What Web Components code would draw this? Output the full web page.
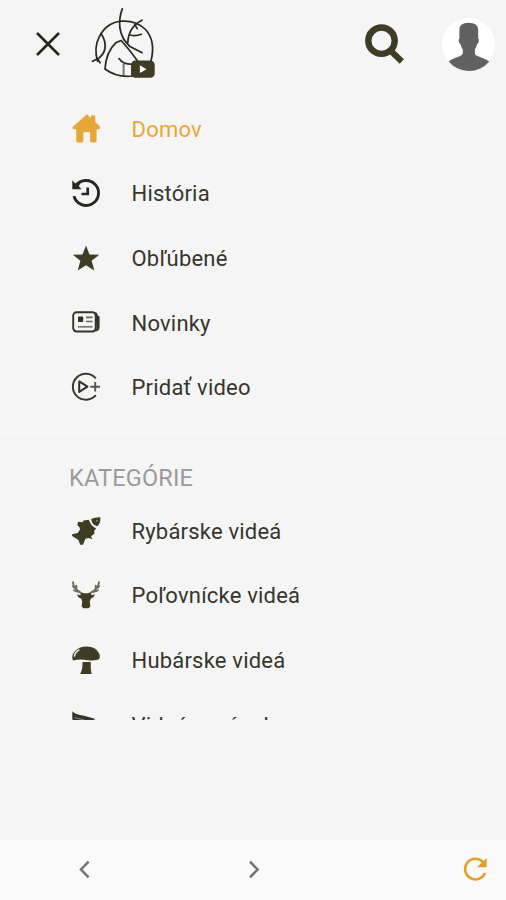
<!DOCTYPE html>
<html lang="sk">
<head>
<meta charset="utf-8">
<title>Menu</title>
<style>
html,body{margin:0;height:100%;background:#f5f5f5}
body{font-family:Roboto,"Noto Sans",sans-serif;color:#35362c;overflow:hidden}
</style>
</head>
<body>
<video-app></video-app>
<script>
const ICONS = {
  close: '<path d="M3 3 25 25M25 3 3 25" fill="none" stroke="#24251c" stroke-width="2.6"/>',
  search: '<circle cx="16.5" cy="16.7" r="13.2" fill="none" stroke="#3c3d24" stroke-width="6.4"/><path d="M26 27 36.8 37.4" fill="none" stroke="#3c3d24" stroke-width="6.2"/>',
  home: '<path d="M1 12.5 14.5.7Q15 .3 15.5.7L19 4V2Q19 1.3 19.7 1.3H22.5Q23.2 1.3 23.2 2V8L27.7 12.3Q29 14 27.3 15.3H24.6V26.5Q24.6 28.4 22.8 28.4H19.6Q18.1 28.4 18.1 26.8V18.2H11.4V26.8Q11.4 28.4 9.9 28.4H6Q4.2 28.4 4.2 26.5V15.3H1.5Q-.5 14 1 12.5Z" fill="#e7a737"/>',
  history: '<path d="M4 6.6A12.5 12.5 0 1 1 2 17.2" fill="none" stroke="#272820" stroke-width="2.9"/><path d="M.3 1.2V10.2H9.6L6.8 7.3 8.2 4.6 5.8 3 3.2 4.6Z" fill="#272820"/><path d="M15.7 8.5V15H9.5" fill="none" stroke="#272820" stroke-width="2.7"/>',
  star: '<path d="m14 .8 3.5 8.9 9.8.4-7.7 5.9 2.8 9.7-8.4-5.2-8.3 5.2 2.7-9.7L.7 10.1l9.8-.4Z" transform="translate(0 .7)" fill="#3c3d24"/>',
  news: '<rect x="1.2" y="4.2" width="22.5" height="19.3" rx="3.4" fill="none" stroke="#34352a" stroke-width="1.9"/><path d="M23 4.2Q25.6 4.2 25.7 7.5L27.6 8.6V19Q27.6 23.5 22.5 23.5Q24.5 22.5 24.5 20Z" fill="#34352a"/><rect x="6" y="8.5" width="5.2" height="5.5" rx=".7" fill="#303126"/><path d="M14 9.3h6.5M14 13.5h6.5" stroke="#66675d" stroke-width="1.7"/><path d="M6 18.8h14.5" stroke="#77786f" stroke-width="1.7"/>',
  add: '<path d="M23.8 5.3A13 13 0 1 0 23.8 22.1" fill="none" stroke="#393a2e" stroke-width="2"/><path d="M7.2 8.4 15.5 13.7 7.2 18.9Z" fill="none" stroke="#303125" stroke-width="2" stroke-linejoin="round"/><path d="M18.3 13.7H28M23.2 9.1V18.5" fill="none" stroke="#53544a" stroke-width="1.9"/>',
  fish: '<path d="M19.2 1.9Q23 0 28.3.2Q29 5.5 25.4 9.3Q19.6 7.6 19.2 1.9Z" fill="#3c3d24"/><circle cx="24.8" cy="3.7" r="1" fill="#85866f"/><path d="M16.9 2.8Q18.3 8.6 24.2 11.4L22.3 13.8 22.4 16.8 19 19.3 20.3 22 16.5 21 13.4 21.8 11 27.7H8.2L6.4 22.9.1 19V17.2L5.7 15.9 8 12.5 7.6 10.5 5.4 8.3 6 4.7 10.6 5.3 11.5 3.6Z" fill="#3c3d24"/>',
  deer: '<g fill="none" stroke="#6b6c5e" stroke-width="1.9" stroke-linecap="round"><path d="M10.7 12.8Q8 11.3 6.8 10.2Q1.4 7 1 1.2M2.2 6.5.9 5.2M4.4 9.2 4.3 4.8M6.8 10.7Q3.4 10.8 2 9.2"/><path d="M17 12.8Q20 11.3 21 10.2Q26.4 7 27 1.2M25.9 6.5 27.2 5.2M23.6 9.2 23.7 4.8M21 10.7Q24.6 10.8 26 9.2"/></g><path d="M9 12.3H18.8L19.6 14.2 22.8 13.3Q22 16.9 18.8 17.4L17.8 20.5 18.3 25.5 16.5 27.2H11.5L9.7 25.5 10.2 20.5 9.2 17.4Q6 17 5.2 13.3L8.3 14.2Z" fill="#3c3d24"/>',
  mushroom: '<path d="M1 14.4Q-1 10 2.4 5.7Q7 .4 14.8.5Q24 .8 27.2 7.4Q28.7 12 26.4 13.5Q20 15.3 12 13.7Q6 13.2 1 14.4Z" fill="#3c3d24"/><path d="M2.4 10.6Q2.6 6.2 7.4 3.7" fill="none" stroke="#e3e4d9" stroke-width="1.7"/><path d="M10.5 16H18.8Q18.3 22 19.6 28H8.2Q10.8 23 10.5 16Z" fill="#3c3d24"/>',
  horn: '<path d="M.3 .3Q3 3.4 12 4.8L22 7.6 24 11 10 10.8Q3 10 .3 8.5Z" fill="#34352a"/><path d="M2.5 6.7 12 8.9" stroke="#a2a396" stroke-width=".8"/>',
  prev: '<path d="M12.6 2.7 5 10.5 12.6 18.3" fill="none" stroke="#737373" stroke-width="2.5"/>',
  next: '<path d="M5 2.7 12.6 10.5 5 18.3" fill="none" stroke="#737373" stroke-width="2.5"/>',
  refresh: '<path d="M20.2 5.3A10.3 10.3 0 1 0 22 16" fill="none" stroke="#e2a126" stroke-width="2.6"/><path d="M23.7.9V10.3H14L17.8 6.5 20.2 4.6Z" fill="#e2a126"/>',
  avatar: '<circle cx="26.5" cy="26.5" r="26.5" fill="#fff"/><path d="M6.6 43.6Q9.5 41.2 13 40Q20.5 37.8 20.8 35.6V31.5Q19.1 29.2 18.4 26Q16.7 25.5 16.8 21.2L17.4 20.2V11.8Q17.4 4.8 26.5 4.8Q36.2 4.8 36.2 12V20.2L36.8 21.2Q37 25.5 35.1 26Q34.6 29 32.9 31.3V35.6Q33.2 37.9 40.4 40Q44.3 41.2 47.3 43.5A26.5 26.5 0 0 1 6.6 43.6Z" fill="#616161"/>',
  logo: '<g fill="none" stroke="#292a20" stroke-width="1.75" stroke-linecap="round"><path d="M4.6 53.2Q.6 40 6.1 29.2Q13 15 28 13.2Q43 12 52.5 21.5Q63 33 58 53"/><path d="M29.3.8Q26 9 26.8 19.5Q28.5 31.2 37 38.5L49.2 44.7"/><path d="M49 12.2Q35.5 19 34.8 34.5M41.8 16.4 44.2 20.6M37.3 27Q42 28.6 48.4 26.3"/><path d="M8.2 25.6Q17.3 40.5 5.8 50.3L-.5 53.3M4.2 50.5 7 54.8"/><path d="M45.3 54Q38 43.5 28.2 32.5L22.7 34.8Q13 44 12 61Q24 70 40 68"/><path d="M26 50.6Q30.3 56.7 38 56.1"/></g><path d="M30.6 56V67" stroke="#74756b" stroke-width="2"/><rect x="38" y="52.4" width="23.7" height="17.4" rx="4.4" fill="#3c3d24"/><path d="M46.9 57.3V65L53.5 61.2Z" fill="#fff"/>'
};

class VectorIcon extends HTMLElement {
  connectedCallback() {
    const w = this.getAttribute('w') || 29, h = this.getAttribute('h') || w;
    this.attachShadow({mode:'open'}).innerHTML =
      `<style>:host{display:block;flex:none;width:${w}px;height:${h}px}svg{display:block;overflow:visible}</style>
       <svg width="${w}" height="${h}" viewBox="0 0 ${w} ${h}">${ICONS[this.getAttribute('name')]}</svg>`;
  }
}
customElements.define('vector-icon', VectorIcon);

class MenuItem extends HTMLElement {
  connectedCallback() {
    this.attachShadow({mode:'open'}).innerHTML = `
      <style>
        :host{display:flex;align-items:center;height:64.7px;flex:none;gap:30.5px;padding-left:72px;
          font-size:22px;line-height:28px;letter-spacing:.2px;white-space:nowrap}
        :host([active]){color:#e7a737}
        span{padding-top:1.4px}
      </style>
      <vector-icon name="${this.getAttribute('icon')}"></vector-icon><span><slot></slot></span>`;
  }
}
customElements.define('menu-item', MenuItem);

class TopBar extends HTMLElement {
  connectedCallback() {
    this.attachShadow({mode:'open'}).innerHTML = `
      <style>
        :host{display:flex;align-items:center;height:88px;flex:none;padding:0 11px 0 34px;box-sizing:border-box}
        .logo{margin:0 0 2px 31px}.search{margin-left:auto;margin-right:37px}
      </style>
      <vector-icon name="close" w="28"></vector-icon>
      <vector-icon class="logo" name="logo" w="62" h="71"></vector-icon>
      <vector-icon class="search" name="search" w="40"></vector-icon>
      <vector-icon name="avatar" w="53"></vector-icon>`;
  }
}
customElements.define('top-bar', TopBar);

class SideMenu extends HTMLElement {
  connectedCallback() {
    this.attachShadow({mode:'open'}).innerHTML = `
      <style>
        :host{display:flex;flex-direction:column;height:632px;flex:none;overflow:hidden;box-sizing:border-box;padding-top:8.5px}
        hr{width:100%;height:1px;margin:18px 0 0;border:0;background:#f1f1f1;flex:none}
        h2{margin:24.5px 0 5.3px;padding-left:69px;font-size:23.5px;letter-spacing:.2px;line-height:30px;font-weight:400;color:#9b9b9b;flex:none}
      </style>
      <menu-item icon="home" active>Domov</menu-item>
      <menu-item icon="history">História</menu-item>
      <menu-item icon="star">Obľúbené</menu-item>
      <menu-item icon="news">Novinky</menu-item>
      <menu-item icon="add">Pridať video</menu-item>
      <hr>
      <h2>KATEGÓRIE</h2>
      <menu-item icon="fish">Rybárske videá</menu-item>
      <menu-item icon="deer">Poľovnícke videá</menu-item>
      <menu-item icon="mushroom">Hubárske videá</menu-item>
      <menu-item icon="horn">Videá z prírody</menu-item>`;
  }
}
customElements.define('side-menu', SideMenu);

class BrowserBar extends HTMLElement {
  connectedCallback() {
    this.attachShadow({mode:'open'}).innerHTML = `
      <style>
        :host{display:flex;align-items:center;height:60px;flex:none;margin-top:auto;padding:0 18px 2px 76px;box-sizing:border-box;background:#fafafa}
        .next{margin-left:151px}.refresh{margin-left:auto}
      </style>
      <vector-icon name="prev" w="18" h="21"></vector-icon>
      <vector-icon class="next" name="next" w="18" h="21"></vector-icon>
      <vector-icon class="refresh" name="refresh" w="25"></vector-icon>`;
  }
}
customElements.define('browser-bar', BrowserBar);

class VideoApp extends HTMLElement {
  connectedCallback() {
    this.attachShadow({mode:'open'}).innerHTML = `
      <style>:host{display:flex;flex-direction:column;height:900px;background:#f5f5f5}</style>
      <top-bar></top-bar><side-menu></side-menu><browser-bar></browser-bar>`;
  }
}
customElements.define('video-app', VideoApp);
</script>
</body>
</html>
